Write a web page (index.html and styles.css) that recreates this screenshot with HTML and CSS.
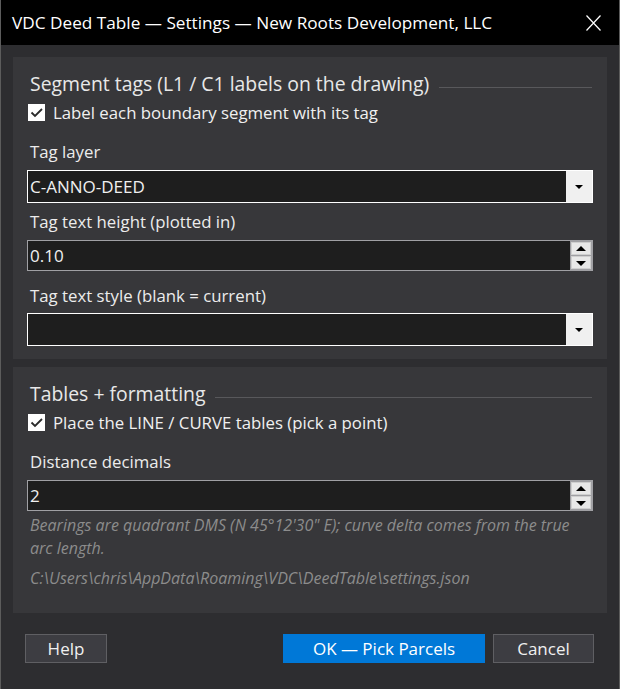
FILE: index.html
```html
<!DOCTYPE html>
<html>
<head>
<meta charset="utf-8">
<link rel="stylesheet" href="styles.css">
</head>
<body>
<div class="window">
  <div class="titlebar">
    <span class="title">VDC Deed Table — Settings — New Roots Development, LLC</span>
    <svg class="close" width="15" height="16" viewBox="0 0 15 16"><path d="M0.5 0.5 L14.5 15.5 M14.5 0.5 L0.5 15.5" stroke="#ffffff" stroke-width="1.2" fill="none"/></svg>
  </div>
  <div class="content">
    <section class="group">
      <div class="group-head"><span class="group-title">Segment tags (L1 / C1 labels on the drawing)</span><span class="rule"></span></div>
      <label class="check-row">
        <span class="checkbox"><svg width="17" height="17" viewBox="0 0 17 17"><path d="M3.5 8.5 L7 12 L14 5" stroke="#2b2b2b" stroke-width="1.8" fill="none"/></svg></span>
        <span>Label each boundary segment with its tag</span>
      </label>
      <div class="field-label first">Tag layer</div>
      <div class="combo">
        <span class="combo-value">C-ANNO-DEED</span>
        <span class="combo-btn"><span class="tri-down"></span></span>
      </div>
      <div class="field-label">Tag text height (plotted in)</div>
      <div class="spin">
        <span class="spin-value">0.10</span>
        <span class="spin-btns">
          <span class="spin-btn"><span class="tri-up"></span></span>
          <span class="spin-btn"><span class="tri-down big"></span></span>
        </span>
      </div>
      <div class="field-label third">Tag text style (blank = current)</div>
      <div class="combo combo-last">
        <span class="combo-value"></span>
        <span class="combo-btn"><span class="tri-down"></span></span>
      </div>
    </section>
    <section class="group group2">
      <div class="group-head"><span class="group-title">Tables + formatting</span><span class="rule"></span></div>
      <label class="check-row">
        <span class="checkbox"><svg width="17" height="17" viewBox="0 0 17 17"><path d="M3.5 8.5 L7 12 L14 5" stroke="#2b2b2b" stroke-width="1.8" fill="none"/></svg></span>
        <span>Place the LINE / CURVE tables (pick a point)</span>
      </label>
      <div class="field-label first">Distance decimals</div>
      <div class="spin">
        <span class="spin-value">2</span>
        <span class="spin-btns">
          <span class="spin-btn"><span class="tri-up"></span></span>
          <span class="spin-btn"><span class="tri-down big"></span></span>
        </span>
      </div>
      <p class="hint">Bearings are quadrant DMS (N 45°12'30" E); curve delta comes from the true arc length.</p>
      <p class="hint path">C:\Users\chris\AppData\Roaming\VDC\DeedTable\settings.json</p>
    </section>
    <div class="buttons">
      <button class="btn btn-help">Help</button>
      <div class="btn-right">
        <button class="btn btn-primary">OK — Pick Parcels</button>
        <button class="btn btn-cancel">Cancel</button>
      </div>
    </div>
  </div>
</div>
</body>
</html>
```
FILE: styles.css
```css
* { box-sizing: border-box; }
html, body { margin: 0; padding: 0; background: #2d2d30; }
body {
  font-family: "Open Sans", "Noto Sans", "Liberation Sans", sans-serif;
  color: #f0f0f0;
  width: 620px;
  height: 689px;
  overflow: hidden;
}
.window {
  width: 620px;
  height: 689px;
  border-left: 1px solid #5c5c5c;
  border-right: 1px solid #5c5c5c;
  background: #2d2d30;
}
.titlebar {
  height: 45px;
  background: #000000;
  display: flex;
  align-items: center;
  justify-content: space-between;
  padding: 0 18px 0 11px;
}
.title {
  font-size: 17.2px;
  color: #ffffff;
  margin-top: -1px;
  white-space: nowrap;
}
.close { display: block; margin-top: 1px; }
.content { padding: 12px 12px 0 12px; }
.group {
  background: #37373a;
  padding: 14px 14px 13px 14px;
}
.group2 { margin-top: 8px; padding-bottom: 23px; }
.group-head {
  display: flex;
  align-items: center;
  height: 24px;
  padding-left: 3px;
}
.group-title {
  font-size: 19.4px;
  color: #e8e8e8;
  white-space: nowrap;
}
.rule {
  flex: 1;
  height: 1px;
  background: #58585b;
  margin: 8px 1px 0 10px;
}
.check-row {
  display: flex;
  align-items: center;
  height: 20px;
  margin-top: 7px;
  padding-left: 1px;
  font-size: 16.8px;
}
.checkbox {
  width: 17px;
  height: 17px;
  background: #ffffff;
  margin-right: 8px;
  display: block;
  flex: none;
}
.checkbox svg { display: block; }
.field-label {
  height: 22px;
  line-height: 22px;
  font-size: 16.8px;
  padding-left: 3px;
  margin-top: 8px;
  color: #ececec;
  white-space: nowrap;
}
.field-label.first { margin-top: 19px; }
.field-label.third { margin-top: 14px; }
.combo {
  height: 33px;
  margin-top: 7px;
  border: 1px solid #ffffff;
  background: #1e1e1e;
  display: flex;
}
.combo-last { margin-top: 6px; }
.combo-value {
  flex: 1;
  font-size: 17px;
  line-height: 31px;
  padding-left: 2px;
}
.combo-btn {
  width: 26px;
  background: #f0f0f0;
  display: flex;
  align-items: center;
  justify-content: center;
}
.tri-down {
  width: 0; height: 0;
  border-left: 4px solid transparent;
  border-right: 4px solid transparent;
  border-top: 4px solid #000000;
  margin-top: 1px;
}
.tri-up {
  width: 0; height: 0;
  border-left: 5px solid transparent;
  border-right: 5px solid transparent;
  border-bottom: 5px solid #000000;
}
.tri-down.big {
  border-left-width: 5px;
  border-right-width: 5px;
  border-top-width: 5px;
}
.spin {
  height: 31px;
  margin-top: 7px;
  border: 1px solid #a0a0a4;
  background: #1e1e1e;
  display: flex;
}
.spin-value {
  flex: 1;
  font-size: 17px;
  line-height: 29px;
  padding-left: 2px;
}
.spin-btns {
  width: 22px;
  display: flex;
  flex-direction: column;
  background: #a0a0a4;
  padding: 1px;
  gap: 1px;
}
.spin-btn {
  flex: 1;
  background: #e8e8e8;
  border: 1px solid #cfcfcf;
  display: flex;
  align-items: center;
  justify-content: center;
}
.hint {
  margin: 3px 0 0 0;
  padding-left: 3px;
  padding-right: 22px;
  font-size: 16px;
  font-style: italic;
  line-height: 23px;
  color: #8c8c8c;
}
.hint.path { margin-top: 7px; white-space: nowrap; }
.buttons {
  margin-top: 21px;
  display: flex;
  justify-content: space-between;
  padding: 0 0 0 12px;
}
.btn-right { display: flex; gap: 8px; margin-right: 13px; }
.btn {
  height: 29px;
  font-family: inherit;
  font-size: 17px;
  color: #f0f0f0;
  background: #3d3d42;
  border: 1px solid #5f5f63;
  padding: 0;
  margin: 0;
}
.btn-help { width: 82px; }
.btn-primary { width: 202px; background: #0078d7; border-color: #0078d7; color: #ffffff; }
.btn-cancel { width: 101px; }
```
